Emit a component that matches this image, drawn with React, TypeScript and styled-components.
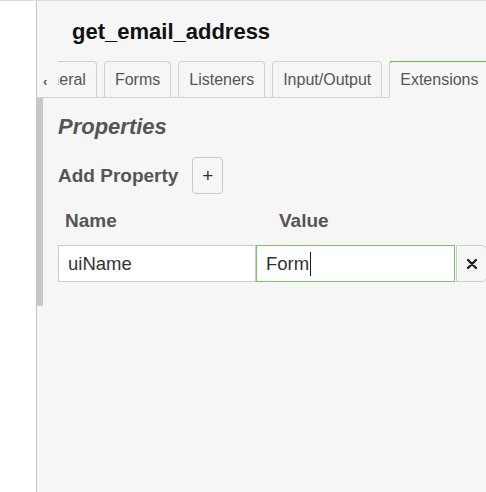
import React from "react";
import styled, { createGlobalStyle } from "styled-components";

const Global = createGlobalStyle`
  html, body { margin: 0; padding: 0; background: #ffffff; }
  body {
    width: 486px; height: 492px; overflow: hidden;
    font-family: "Liberation Sans", Arial, Helvetica, sans-serif;
  }
`;

const Page = styled.div`
  display: flex;
  height: 491px;
  border-top: 1px solid #dcdcdc;
  overflow: hidden;
`;

const Gutter = styled.div`
  flex: 0 0 36px;
  background: #ffffff;
`;

const Panel = styled.div`
  flex: 0 0 480px;
  display: flex;
  flex-direction: column;
  background: #f6f6f6;
  border-left: 1px solid #c4c4c4;
`;

const Title = styled.h1`
  margin: 0;
  padding: 18px 0 0 35px;
  font-size: 22px;
  line-height: 26px;
  font-weight: bold;
  color: #111;
`;

const TabBar = styled.div`
  display: flex;
  align-items: flex-end;
  margin-top: 16px;
  height: 36px;
  border-bottom: 1px solid #d2d2d2;
`;

const ScrollArrow = styled.div`
  flex: 0 0 21px;
  height: 36px;
  display: flex;
  align-items: center;
  justify-content: flex-start;
  padding: 5px 0 0 6px;
  box-sizing: border-box;
  font-size: 13px;
  font-weight: bold;
  color: #555;
`;

const TabViewport = styled.div`
  flex: 1;
  display: flex;
  align-items: flex-end;
  gap: 7px;
  overflow: hidden;
  height: 37px;
  margin-bottom: -1px;
`;

const Tab = styled.div<{ $active?: boolean; $offset?: number }>`
  flex: 0 0 auto;
  height: 35px;
  display: flex;
  align-items: center;
  padding: 0 10px;
  margin-left: ${(p) => p.$offset ?? 0}px;
  border: 1px solid #d0d0d0;
  border-top: ${(p) => (p.$active ? "2px solid #65bb50" : "1px solid #d0d0d0")};
  border-bottom: 1px solid ${(p) => (p.$active ? "#f6f6f6" : "#d2d2d2")};
  border-radius: 4px 4px 0 0;
  background: #f6f6f6;
  font-size: 16px;
  color: #555;
  white-space: nowrap;
`;

const Content = styled.div`
  display: flex;
  flex: 1;
`;

const ScrollThumb = styled.div`
  flex: 0 0 6px;
  height: 208px;
  background: #c8c8c8;
`;

const Body = styled.div`
  flex: 1;
  padding: 16px 0 0 15px;
  display: flex;
  flex-direction: column;
`;

const SectionTitle = styled.h2`
  margin: 0;
  font-size: 22px;
  line-height: 26px;
  font-weight: bold;
  font-style: italic;
  color: #555;
`;

const AddRow = styled.div`
  display: flex;
  align-items: center;
  gap: 14px;
  margin-top: 17px;
`;

const AddLabel = styled.span`
  font-size: 19px;
  font-weight: bold;
  color: #555;
`;

const PlusButton = styled.button`
  width: 31px;
  height: 37px;
  padding: 0;
  border: 1px solid #c9c9c9;
  border-radius: 4px;
  background: #f6f6f6;
  font-family: inherit;
  font-size: 19px;
  color: #333;
  display: flex;
  align-items: center;
  justify-content: center;
`;

const HeaderRow = styled.div`
  display: flex;
  margin-top: 16px;
  padding-left: 7px;
  line-height: 22px;
`;

const HeaderCell = styled.div<{ $width?: number }>`
  flex: 0 0 ${(p) => (p.$width ? `${p.$width}px` : "auto")};
  font-size: 19px;
  font-weight: bold;
  color: #555;
`;

const FieldRow = styled.div`
  display: flex;
  margin-top: 13px;
`;

const Field = styled.div<{ $width: number; $focused?: boolean }>`
  box-sizing: border-box;
  width: ${(p) => p.$width}px;
  height: 37px;
  display: flex;
  align-items: center;
  padding-left: 9px;
  background: #ffffff;
  border: 1px solid ${(p) => (p.$focused ? "#7cc46a" : "#cccccc")};
  font-size: 18.5px;
  color: #333;
`;

const Caret = styled.span`
  display: inline-block;
  width: 1px;
  height: 24px;
  margin-left: 1px;
  background: #222;
`;

const RemoveButton = styled.button`
  box-sizing: border-box;
  width: 31px;
  height: 37px;
  margin-left: 1px;
  padding: 0;
  border: 1px solid #cccccc;
  border-radius: 0 5px 5px 0;
  background: #f6f6f6;
  display: flex;
  align-items: center;
  justify-content: center;
`;

export default function App() {
  return (
    <>
      <Global />
      <Page>
        <Gutter />
        <Panel>
          <Title>get_email_address</Title>
          <TabBar>
            <ScrollArrow>‹</ScrollArrow>
            <TabViewport>
              <Tab $offset={-40}>General</Tab>
              <Tab>Forms</Tab>
              <Tab>Listeners</Tab>
              <Tab>Input/Output</Tab>
              <Tab $active>Extensions</Tab>
            </TabViewport>
          </TabBar>
          <Content>
            <ScrollThumb />
            <Body>
              <SectionTitle>Properties</SectionTitle>
              <AddRow>
                <AddLabel>Add Property</AddLabel>
                <PlusButton>+</PlusButton>
              </AddRow>
              <HeaderRow>
                <HeaderCell $width={214}>Name</HeaderCell>
                <HeaderCell>Value</HeaderCell>
              </HeaderRow>
              <FieldRow>
                <Field $width={198}>uiName</Field>
                <Field $width={199} $focused>
                  Form
                  <Caret />
                </Field>
                <RemoveButton aria-label="remove">
                  <svg width="10" height="10" viewBox="0 0 10 10">
                    <path d="M1 1 L9 9 M9 1 L1 9" stroke="#222" strokeWidth="2.4" strokeLinecap="round" />
                  </svg>
                </RemoveButton>
              </FieldRow>
            </Body>
          </Content>
        </Panel>
      </Page>
    </>
  );
}
